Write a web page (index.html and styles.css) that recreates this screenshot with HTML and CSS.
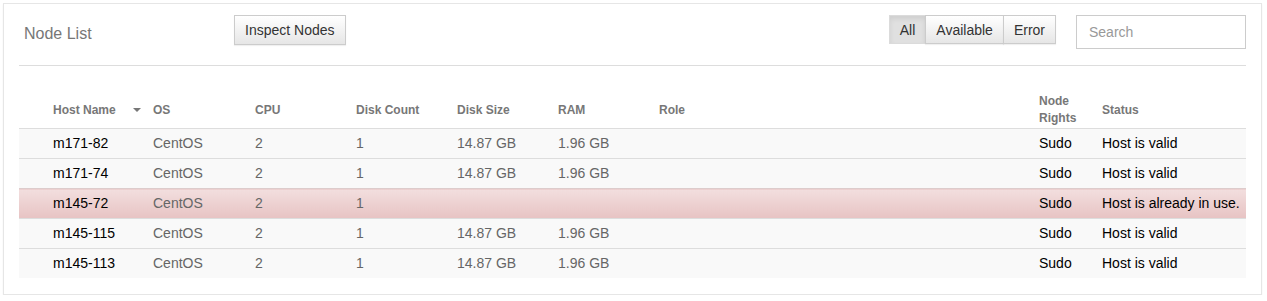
FILE: index.html
```html
<!DOCTYPE html>
<html lang="en">
  <head>
    <meta charset="UTF-8" />
    <title>Node List</title>
    <link rel="stylesheet" href="styles.css">
  </head>
  <body>
    <div class="panel">
      <div class="panel-header">
        <h2 class="title">Node List</h2>
        <button class="btn btn-inspect">Inspect Nodes</button>
        <div class="spacer"></div>
        <div class="btn-group">
          <button class="btn active">All</button>
          <button class="btn">Available</button>
          <button class="btn">Error</button>
        </div>
        <input class="search" type="text" placeholder="Search" />
      </div>
      <hr class="divider" />

      <table class="node-table">
        <colgroup>
          <col style="width: 134px" />
          <col style="width: 102px" />
          <col style="width: 101px" />
          <col style="width: 101px" />
          <col style="width: 101px" />
          <col style="width: 101px" />
          <col style="width: 380px" />
          <col style="width: 63px" />
          <col style="width: 144px" />
        </colgroup>
        <thead>
          <tr>
            <th>Host Name <span class="caret"></span></th>
            <th>OS</th>
            <th>CPU</th>
            <th>Disk Count</th>
            <th>Disk Size</th>
            <th>RAM</th>
            <th>Role</th>
            <th>Node Rights</th>
            <th>Status</th>
          </tr>
        </thead>
        <tbody>
          <tr>
            <td class="host">m171-82</td>
            <td>CentOS</td>
            <td>2</td>
            <td>1</td>
            <td>14.87 GB</td>
            <td>1.96 GB</td>
            <td></td>
            <td class="dark">Sudo</td>
            <td class="dark">Host is valid</td>
          </tr>
          <tr>
            <td class="host">m171-74</td>
            <td>CentOS</td>
            <td>2</td>
            <td>1</td>
            <td>14.87 GB</td>
            <td>1.96 GB</td>
            <td></td>
            <td class="dark">Sudo</td>
            <td class="dark">Host is valid</td>
          </tr>
          <tr class="danger">
            <td class="host">m145-72</td>
            <td>CentOS</td>
            <td>2</td>
            <td>1</td>
            <td></td>
            <td></td>
            <td></td>
            <td class="dark">Sudo</td>
            <td class="dark">Host is already in use.</td>
          </tr>
          <tr>
            <td class="host">m145-115</td>
            <td>CentOS</td>
            <td>2</td>
            <td>1</td>
            <td>14.87 GB</td>
            <td>1.96 GB</td>
            <td></td>
            <td class="dark">Sudo</td>
            <td class="dark">Host is valid</td>
          </tr>
          <tr>
            <td class="host">m145-113</td>
            <td>CentOS</td>
            <td>2</td>
            <td>1</td>
            <td>14.87 GB</td>
            <td>1.96 GB</td>
            <td></td>
            <td class="dark">Sudo</td>
            <td class="dark">Host is valid</td>
          </tr>
        </tbody>
      </table>
    </div>
  </body>
</html>
```

FILE: styles.css
```css
body {
  font-family: "Liberation Sans", Arial, sans-serif;
  margin: 0;
  background-color: #fff;
  color: #333;
  font-size: 14px;
}

.panel {
  width: 1259px;
  box-sizing: border-box;
  margin: 3px 0 0 3px;
  padding: 11px 15px 16px;
  border: 1px solid #e6e6e6;
  box-shadow: 0 1px 2px rgba(0, 0, 0, 0.05);
  background-color: #fff;
}

.panel-header {
  display: flex;
  align-items: flex-start;
}

.title {
  margin: 9px 0 0 5px;
  width: 210px;
  font-size: 16px;
  line-height: 20px;
  font-weight: normal;
  color: #777;
}

.spacer {
  flex: 1;
}

.btn {
  font-family: "Liberation Sans", Arial, sans-serif;
  font-size: 14px;
  line-height: 17px;
  color: #333;
  padding: 6px 10px;
  background: linear-gradient(to bottom, #fff 0, #e6e6e6 100%);
  border: 1px solid #ccc;
  border-radius: 0;
  box-shadow: 0 1px 1px rgba(0, 0, 0, 0.06);
  cursor: pointer;
}

.btn-inspect {
  padding: 6px 10px;
  height: 30px;
}

.btn-group {
  display: flex;
  margin-right: 20px;
}

.btn-group .btn {
  height: 29px;
  padding: 6px 10px;
}

.btn-group .btn + .btn {
  margin-left: -1px;
}

.btn-group .btn.active {
  background: #e0e0e0;
  border-color: #dbdbdb;
  box-shadow: inset 0 3px 5px rgba(0, 0, 0, 0.08);
}

.search {
  width: 170px;
  height: 34px;
  box-sizing: border-box;
  padding: 6px 12px;
  border: 1px solid #ccc;
  font-family: "Liberation Sans", Arial, sans-serif;
  font-size: 14px;
  color: #555;
}

.search::placeholder {
  color: #999;
}

.divider {
  margin: 16px 0 24px;
  border: 0;
  border-top: 1px solid #ddd;
}

.node-table {
  width: 1227px;
  table-layout: fixed;
  border-collapse: collapse;
}

.node-table th {
  text-align: left;
  font-size: 12px;
  line-height: 17px;
  font-weight: bold;
  color: #777;
  padding: 3px 8px 1px 0;
  vertical-align: middle;
}

.node-table th:first-child,
.node-table td:first-child {
  padding-left: 34px;
}

.caret {
  display: inline-block;
  margin-left: 14px;
  vertical-align: middle;
  border-top: 4px solid #777;
  border-left: 4px solid transparent;
  border-right: 4px solid transparent;
}

.node-table td {
  padding: 6px 8px 6px 0;
  line-height: 17px;
  color: #666;
  border-top: 1px solid #ddd;
  background-color: #f9f9f9;
  white-space: nowrap;
}

.node-table td.host,
.node-table td.dark {
  color: #000;
}

.node-table tr.danger td {
  background: linear-gradient(to bottom, #f2dede 0, #e7c3c3 100%);
  border-top-color: #dcc;
}
```
